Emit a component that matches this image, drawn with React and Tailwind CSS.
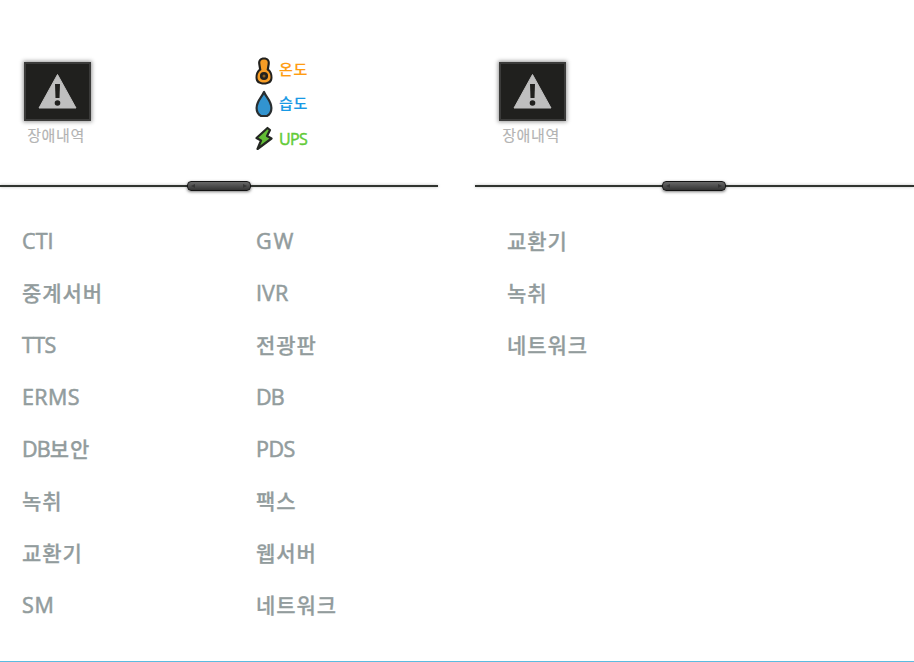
import React from "react";

function Warning() {
  return (
    <div className="flex w-[67px] flex-col items-center">
      <div className="flex h-[59px] w-[67px] items-center justify-center border-2 border-[#3b3b3a] bg-[#20201e] shadow-[0_0_4px_1px_rgba(0,0,0,0.4)]">
        <svg className="-ml-px" width="40" height="37" viewBox="0 0 40 37">
          <path d="M20.5 1.5 L39 35 H2 Z" fill="#bfbfbf" stroke="#bfbfbf" strokeLinejoin="round" />
          <path d="M18 11 H23 L22.5 25 H18.5 Z" fill="#20201e" />
          <circle cx="20.5" cy="30" r="2.8" fill="#20201e" />
        </svg>
      </div>
      <span className="mt-[4px] -ml-[3px] text-[15px] leading-[20px] font-normal tracking-[0.6px] whitespace-nowrap text-[#b3b3b3] [-webkit-text-stroke:0.15px_#b3b3b3]">장애내역</span>
    </div>
  );
}

function Divider() {
  return (
    <div className="flex h-[12px] w-full items-center">
      <div className="h-[2px] w-[187px] bg-[#30342f] shadow-[0_0_3px_rgba(0,0,0,0.3)]" />
      <div className="flex h-[10px] w-[64px] items-center justify-between rounded-[4px] border border-[#141414] bg-linear-to-b from-[#686868] to-[#343434] px-[3px] shadow-[0_1px_3px_rgba(0,0,0,0.5)]">
        <svg width="4" height="4" viewBox="0 0 4 4"><path d="M4 0V4L0 2Z" fill="#343434" /></svg>
        <svg width="4" height="4" viewBox="0 0 4 4"><path d="M0 0V4L4 2Z" fill="#343434" /></svg>
      </div>
      <div className="h-[2px] flex-1 bg-[#30342f] shadow-[0_0_3px_rgba(0,0,0,0.3)]" />
    </div>
  );
}

const latinTracking = {
  GW: "tracking-[1.8px]",
  TTS: "tracking-[-0.6px]",
  ERMS: "tracking-[0.4px]",
  DB: "tracking-[-0.9px]",
  PDS: "tracking-[-0.5px]",
  SM: "tracking-[0.8px]",
};

function Label({ text }) {
  const [, latin, korean] = text.match(/^([A-Z]*)(.*)$/);
  return (
    <span>
      {latin && (
        <span className={`text-[21.5px] [-webkit-text-stroke:0.55px_#929c9d] ${latinTracking[latin] ?? "tracking-[0.1px]"}`}>{latin}</span>
      )}
      {korean && <span className="tracking-[0.9px] [-webkit-text-stroke:0.25px_#929c9d]">{korean}</span>}
    </span>
  );
}

function Names({ items, className }) {
  return (
    <ul className={className}>
      {items.map((item) => (
        <li key={item} className="flex h-[52px] items-center text-[21px] leading-none font-medium whitespace-nowrap text-[#929c9d]">
          <Label text={item} />
        </li>
      ))}
    </ul>
  );
}

function Environment() {
  return (
    <div className="flex flex-col text-[15px] font-medium tracking-[0.7px]">
      <div className="flex h-[34px] items-center gap-[5px] text-[#ff9c10]">
        <svg className="mt-[2px]" width="18" height="28" viewBox="0 0 18 28">
          <path d="M9 0.5C5 0.5 2.8 3 3.2 7L4 12C1.5 14 0.5 17 0.5 20.5C0.5 25.5 4 27.5 9 27.5C14 27.5 17.5 25.5 17.5 20.5C17.5 17 16.5 14 14 12L14.8 7C15.2 3 13 0.5 9 0.5Z" fill="#22211e" />
          <path d="M9 2.5C6 2.5 4.8 4 5.4 7L6.4 13C3.8 14.5 2.5 17 2.5 20C2.5 24 5.5 25.5 9 25.5C12.5 25.5 15.5 24 15.5 20C15.5 17 14.2 14.5 11.6 13L12.6 7C13.2 4 12 2.5 9 2.5Z" fill="#f79d26" />
          <circle cx="9" cy="19" r="2.8" fill="#8a5c1e" stroke="#22211e" strokeWidth="2.6" />
        </svg>
        <span className="-mt-[2px] ml-px [-webkit-text-stroke:0.2px_#ff9c10]">온도</span>
      </div>
      <div className="flex h-[34px] items-center gap-[5px] text-[#1899e5]">
        <svg width="18" height="28" viewBox="0 0 18 28">
          <path d="M9 2C7 7 1.6 11 1.6 18C1.6 22 4 25 6 26H12C14 25 16.4 22 16.4 18C16.4 11 11 7 9 2Z" fill="#3294d0" stroke="#292e30" strokeWidth="2.2" strokeLinejoin="round" />
        </svg>
        <span className="-mt-[2px] ml-px [-webkit-text-stroke:0.2px_#1899e5]">습도</span>
      </div>
      <div className="flex h-[35px] items-center gap-[5px] text-[#62cb36]">
        <svg width="18" height="26" viewBox="0 0 18 26">
          <path d="M12.5 2L1.5 12L6 14.5L2.5 23L16.5 12.5L12 10L15 4Z" fill="#62bd35" stroke="#242722" strokeWidth="2.2" strokeLinejoin="round" />
        </svg>
        <span className="mt-[1px] ml-px text-[16px] tracking-[-0.6px] [-webkit-text-stroke:0.45px_#62cb36]">UPS</span>
      </div>
    </div>
  );
}

export default function App() {
  return (
    <div className="flex h-[662px] w-[914px] flex-col overflow-hidden border-b border-[#5bbbe0] bg-white font-['Open_Sans','Noto_Sans_CJK_KR',sans-serif]">
      <main className="flex flex-1 gap-[37px]">
        <section className="w-[438px]">
          <header className="flex h-[180px] pt-[53px] pl-[24px]">
            <div className="pt-[9px]"><Warning /></div>
            <div className="ml-[164px]"><Environment /></div>
          </header>
          <Divider />
          <div className="flex pt-[23px] pl-[22px]">
            <Names className="w-[234px]" items={["CTI", "중계서버", "TTS", "ERMS", "DB보안", "녹취", "교환기", "SM"]} />
            <Names items={["GW", "IVR", "전광판", "DB", "PDS", "팩스", "웹서버", "네트워크"]} />
          </div>
        </section>
        <section className="w-[439px]">
          <header className="h-[180px] pt-[62px] pl-[24px]"><Warning /></header>
          <Divider />
          <Names className="pt-[23px] pl-[32px]" items={["교환기", "녹취", "네트워크"]} />
        </section>
      </main>
    </div>
  );
}
